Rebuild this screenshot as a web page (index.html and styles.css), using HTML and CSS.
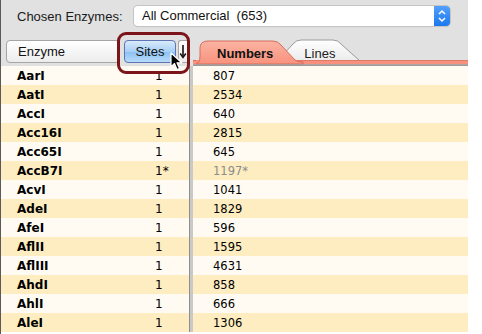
FILE: index.html
```html
<!DOCTYPE html>
<html lang="en">
  <head>
    <meta charset="UTF-8" />
    <meta name="viewport" content="width=device-width, initial-scale=1.0" />
    <title>Enzymes</title>
    <link rel="stylesheet" href="styles.css">
  </head>
  <body>
    <div class="window">
      <div class="toolbar">
        <div class="chosen">
          <span class="chosen-label">Chosen Enzymes:</span>
          <div class="select">
            <span class="select-text">All Commercial&nbsp;&nbsp;(653)</span>
            <span class="stepper">
              <svg width="16" height="20" viewBox="0 0 16 20">
                <path d="M5 8 L8 5 L11 8" fill="none" stroke="#fff" stroke-width="1.5"/>
                <path d="M5 12 L8 15 L11 12" fill="none" stroke="#fff" stroke-width="1.5"/>
              </svg>
            </span>
          </div>
        </div>
        <div class="heads">
          <div class="left-head">
            <div class="btn btn-enzyme">Enzyme</div>
            <div class="btn btn-sites">Sites</div>
            <div class="btn btn-sort">
              <svg width="8" height="21" viewBox="0 0 8 21">
                <path d="M4 4 L4 16" stroke="#111" stroke-width="1.6"/>
                <path d="M1.2 12.5 L4 16.5 L6.8 12.5" fill="none" stroke="#111" stroke-width="1.4"/>
              </svg>
            </div>
            <div class="highlight"></div>
            <svg class="cursor" width="13" height="19" viewBox="0 0 13 19">
              <path d="M1 1 L1 15 L4.5 11.5 L7 17.5 L9.5 16.5 L7 10.8 L11.8 10.8 Z" fill="#000" stroke="#fff" stroke-width="1.2" stroke-linejoin="round"/>
            </svg>
          </div>
          <div class="splitter-top"></div>
          <div class="tabs">
            <svg class="tab-shapes" width="276" height="28" viewBox="0 0 276 28">
              <defs>
                <linearGradient id="gLines" x1="0" y1="0" x2="0" y2="1">
                  <stop offset="0" stop-color="#ffffff"/>
                  <stop offset="1" stop-color="#ebebeb"/>
                </linearGradient>
                <linearGradient id="gNum" x1="0" y1="0" x2="0" y2="1">
                  <stop offset="0" stop-color="#fbb3a2"/>
                  <stop offset="1" stop-color="#f8927e"/>
                </linearGradient>
              </defs>
              <path d="M84 23 L100 6 Q103 2 108 2 L140 2 Q145 2 148 6 L167 23 Z" fill="url(#gLines)" stroke="#9a9a9a" stroke-width="1"/>
              <rect x="0" y="22" width="276" height="4.5" fill="#f7917d"/>
              <path d="M3 26 Q7 25 7 18 L7 10 Q7 3 15 3 L80 3 Q85 3 88 7 L102 22 Q104 24 110 24 L110 26 Z" fill="url(#gNum)" stroke="#d66e5b" stroke-width="1"/>
              <line x1="0" y1="22.5" x2="3" y2="22.5" stroke="#d66e5b"/>
              <line x1="104" y1="22.5" x2="276" y2="22.5" stroke="#e07a67"/>
              <rect x="0" y="26.3" width="276" height="1.7" fill="#9b9b9b"/>
            </svg>
            <span class="tab tab-numbers">Numbers</span>
            <span class="tab tab-lines">Lines</span>
          </div>
        </div>
      </div>
      <div class="table">
        <div class="names">
          <div class="row"><span class="name">AarI</span><span class="sites">1</span></div>
          <div class="row"><span class="name">AatI</span><span class="sites">1</span></div>
          <div class="row"><span class="name">AccI</span><span class="sites">1</span></div>
          <div class="row"><span class="name">Acc16I</span><span class="sites">1</span></div>
          <div class="row"><span class="name">Acc65I</span><span class="sites">1</span></div>
          <div class="row"><span class="name">AccB7I</span><span class="sites">1*</span></div>
          <div class="row"><span class="name">AcvI</span><span class="sites">1</span></div>
          <div class="row"><span class="name">AdeI</span><span class="sites">1</span></div>
          <div class="row"><span class="name">AfeI</span><span class="sites">1</span></div>
          <div class="row"><span class="name">AflII</span><span class="sites">1</span></div>
          <div class="row"><span class="name">AflIII</span><span class="sites">1</span></div>
          <div class="row"><span class="name">AhdI</span><span class="sites">1</span></div>
          <div class="row"><span class="name">AhlI</span><span class="sites">1</span></div>
          <div class="row"><span class="name">AleI</span><span class="sites">1</span></div>
        </div>
        <div class="splitter"></div>
        <div class="numbers">
          <div class="row">807</div>
          <div class="row">2534</div>
          <div class="row">640</div>
          <div class="row">2815</div>
          <div class="row">645</div>
          <div class="row muted">1197*</div>
          <div class="row">1041</div>
          <div class="row">1829</div>
          <div class="row">596</div>
          <div class="row">1595</div>
          <div class="row">4631</div>
          <div class="row">858</div>
          <div class="row">666</div>
          <div class="row">1306</div>
        </div>
      </div>
    </div>
  </body>
</html>
```

FILE: styles.css
```css
body {
  margin: 0;
  background: #ffffff;
  font-family: "Liberation Sans", Arial, sans-serif;
}

.window {
  width: 467px;
  height: 334px;
  overflow: hidden;
  border-left: 1px solid #5a5a5a;
}

.toolbar {
  background: #e1e1e1;
  height: 66px;
}

.chosen {
  display: flex;
  align-items: center;
  height: 34px;
  padding-left: 16px;
  box-sizing: border-box;
}

.chosen-label {
  font-size: 13px;
  color: #1a1a1a;
  width: 117px;
  margin-top: -2px;
}

.select {
  display: flex;
  align-items: center;
  justify-content: space-between;
  width: 316px;
  height: 20px;
  margin-top: -3px;
  background: #ffffff;
  border-radius: 4px;
  box-shadow: 0 0 0 1px #c4c4c4, 0 1px 1px rgba(0, 0, 0, 0.15);
}

.select-text {
  font-size: 13px;
  color: #111;
  padding-left: 8px;
}

.stepper {
  display: flex;
  width: 16px;
  height: 20px;
  background: linear-gradient(#52a0fb, #1c78ef);
  border-radius: 0 4px 4px 0;
}

.heads {
  display: flex;
  height: 32px;
}

.left-head {
  position: relative;
  display: flex;
  width: 188px;
  padding-top: 6px;
  padding-left: 5px;
  box-sizing: border-box;
  gap: 4px;
}

.btn {
  height: 23px;
  box-sizing: border-box;
  border: 1px solid #a5a5a5;
  border-radius: 4px;
  font-size: 13px;
  color: #111;
  line-height: 21px;
  background: linear-gradient(#ffffff, #ececec);
}

.btn-enzyme {
  width: 114px;
  padding-left: 11px;
}

.btn-sites {
  width: 52px;
  text-align: center;
  border-color: #5e74b4;
  background: linear-gradient(#d8ebfb 0%, #a9d0f5 50%, #8cc0f2 51%, #b7dcfa 100%);
}

.btn-sort {
  display: flex;
  width: 9px;
  margin-left: -2px;
  border-radius: 3px 0 0 3px;
  border-right: none;
  overflow: hidden;
}

.highlight {
  position: absolute;
  left: 116px;
  top: -2px;
  width: 73px;
  height: 42px;
  box-sizing: border-box;
  border: 3px solid #7b1519;
  border-radius: 9px;
}

.cursor {
  position: absolute;
  left: 169px;
  top: 18px;
}

.splitter-top {
  width: 4px;
}

.tabs {
  position: relative;
  flex: 1;
  display: flex;
  align-items: flex-start;
}

.tab-shapes {
  position: absolute;
  left: 0;
  top: 4px;
}

.tab {
  position: relative;
  font-size: 13px;
  color: #111;
  margin-top: 12px;
}

.tab-numbers {
  font-weight: bold;
  margin-left: 24px;
}

.tab-lines {
  margin-left: 31px;
  color: #222;
}

.table {
  display: flex;
  font-family: Verdana, "DejaVu Sans", sans-serif;
  font-size: 12px;
  color: #000;
}

.names {
  width: 188px;
}

.numbers {
  flex: 1;
}

.row {
  display: flex;
  align-items: center;
  height: 19px;
  background: #fffbf3;
}

.row:nth-child(even) {
  background: #fdedc0;
}

.name {
  width: 138px;
  padding-left: 16px;
  font-weight: bold;
}

.splitter {
  width: 4px;
  background: #c9c9c9;
  border-left: 1px solid #8f8f8f;
  box-sizing: border-box;
}

.numbers .row {
  padding-left: 20px;
  font-size: 11.5px;
}

.muted {
  color: #8c8c8c;
}
```
